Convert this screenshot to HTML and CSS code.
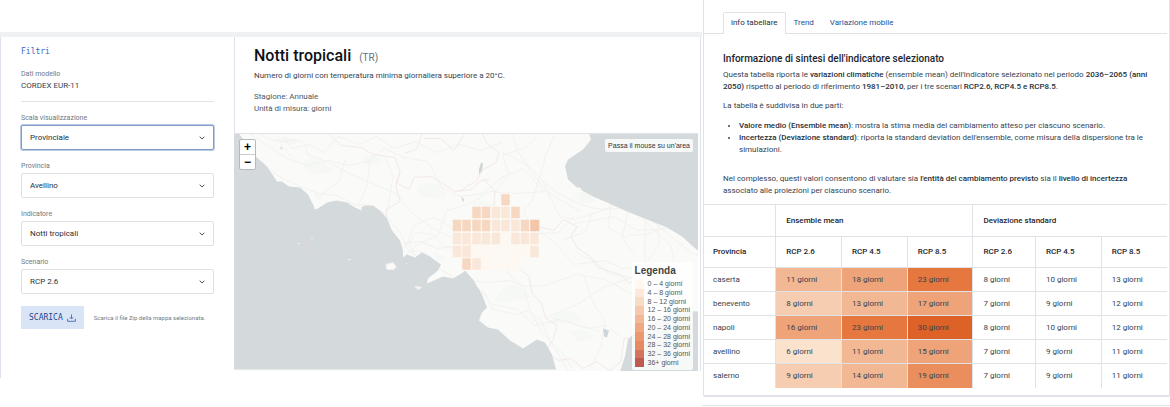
FILE: index.html
```html
<!DOCTYPE html>
<html lang="it">
<head>
<meta charset="utf-8">
<title>Notti tropicali</title>
<link rel="stylesheet" href="styles.css">
</head>
<body>
<div class="page">
  <div class="explorer">
    <div class="band"></div>
    <div class="explorer-body">
      <aside class="filters">
        <h2 class="filters-title">Filtri</h2>
        <div class="model">
          <div class="label">Dati modello</div>
          <div class="model-name">CORDEX EUR-11</div>
        </div>
        <div class="field">
          <label class="label" for="scala">Scala visualizzazione</label>
          <div class="picker"><select class="select active" id="scala"><option>Provinciale</option></select><svg class="chevron" viewBox="0 0 6 4"><path d="M.7.7 3 3 5.300.7"/></svg></div>
        </div>
        <div class="field">
          <label class="label" for="provincia">Provincia</label>
          <div class="picker"><select class="select" id="provincia"><option>Avellino</option></select><svg class="chevron" viewBox="0 0 6 4"><path d="M.7.7 3 3 5.300.7"/></svg></div>
        </div>
        <div class="field">
          <label class="label" for="indicatore">Indicatore</label>
          <div class="picker"><select class="select" id="indicatore"><option>Notti tropicali</option></select><svg class="chevron" viewBox="0 0 6 4"><path d="M.7.7 3 3 5.300.7"/></svg></div>
        </div>
        <div class="field">
          <label class="label" for="scenario">Scenario</label>
          <div class="picker"><select class="select" id="scenario"><option>RCP 2.6</option></select><svg class="chevron" viewBox="0 0 6 4"><path d="M.7.7 3 3 5.300.7"/></svg></div>
        </div>
        <div class="download">
          <button class="download-button" type="button">SCARICA
            <svg class="download-icon" viewBox="0 0 9 8"><path d="M4.500.5v4.300M2.700 3.200l1.800 1.800 1.800-1.800M.6 4.800v2.500h7.800v-2.500"/></svg>
          </button>
          <span class="download-note">Scarica il file Zip della mappa selezionata.</span>
        </div>
      </aside>
      <main class="indicator">
        <header class="indicator-head">
          <h1 class="title">Notti tropicali <span class="code">(TR)</span></h1>
          <p class="description">Numero di giorni con temperatura minima giornaliera superiore a 20°C.</p>
          <p class="meta">Stagione: Annuale<br>Unità di misura: giorni</p>
        </header>
        <div class="map">
          <svg class="map-canvas" viewBox="0 0 464 238" preserveAspectRatio="xMidYMid slice">
            <rect class="land" width="464" height="238"/>
            <g class="park">
              <path d="M68 30q8-7 17-3t12 8-9 5-14-1zM186 52q12-5 20 1t6 9-15 2-14-6zM128 24q10-5 18 1t-5 6-13-2zM79 56l6 5 2 7-5-4zM198 120q6-2 10 3t-4 4zM40 7q9-6 20-2t-5 6zM268 156q15-9 22 0t10 7-22 4-14-5zM320 180q12-6 22 1t-5 9-18-4zM240 70q8-5 17 0t-6 7-13-2zM335 198q11-4 20 2t-11 8zM340 60q13-4 20 3t-12 6z"/>
            </g>
            <g class="road">
              <path d="M13 15q18 22 40 32t31 13l19 2 19 10 9-1 18 8 17 20 8 18 19 12 21 11 16 13 20 5 9 18 24 5 11-4 13 10 10 22 11 17 13 24"/>
              <path d="M26 1q15 9 31 6t16 14l22 8 22 12 33 14 14 6 12 17 20 15 18 9 30 19 30 2 23-8"/>
              <path d="M15 0l38 25 20 7 23-5 19 5 21-5 14-12 20 9 24 4 14 26 18 9 23-3 19-16 21-9 18 20 24 14 15 9"/>
              <path d="M278 0l6 18 12 19 17 21 13 25 14 3 23-7 25-10 18 7 22 10 16 14 20 11"/>
              <path d="M268 19q26 10 37 24t35 25 42 7 47 21 35 26"/>
              <path d="M170 123l15-13 19-8 9-25 23-7 20-12 28 2 26-2M170 110l17-2 16 7 28-3 32-1 24-10 37-2 16-16"/>
              <path d="M305 43q-5 28-16 34l7 13 23 18 21 23 31-4 17 8 22-2 15-22-1-31M403 77l8 11 0 46-15 11-25 8-26 17-33 14M411 88l26 24 4 21"/>
              <path d="M229 146l24 3 24-2 12 6 22-1 32-11 28 5 26 14 29 0M290 155l7 24 11 20 20 20 12 19M289 153l-13-11-9-14M349 141l10 28 12 18-4 26-11 24"/>
              <path d="M244 154l15 17 25 5 16 16 26-6 28 9 18-3 14 11M306 0l-14 14-23 8 6 20-14 15 16 12M321 0l-9 21-6 23 10 16"/>
              <path d="M48 0l9 15 18-4 15 8 14-16 21 8 17-8 18 12 21-7 22 11 22-8 21 6 23-8M111 27l-6 21-20 15M136 28l-3 24-8 19M151 22l8 21-6 36"/>
              <path d="M358 79l-7 20-22 7M377 70l-3 24 20 11M394 79l-6 26 12 14M431 94l-18 7-19 1M340 90q26-4 41-7l22 14 31-2"/>
              <path d="M172 113l8-21 19-8 16 8 14 16M179 120l-4-11 7-10 17 2 11 11 23 9 25-2M204 132l-13-13-15-2"/>
            </g>
            <g class="river">
              <path d="M356 124l20 17 23 3M317 184l36 10 13 4M46 10l12 14M340 117l20 12"/>
            </g>
            <g class="border-line">
              <path d="M95 0l12 12 20 2 12 7 22 3 5 14-4 15 4 15-14 8 1 10-5 6-12 2M166 39l-4 10 13 7 5-12 18-1 23 15 16-2 10-9 8-1"/>
              <path d="M188 0l-5 15-12 5M190 5h17l13 12 10-16M248 0l5 10 12 9-3 10-13 7-7 12-8 4-8 6M250 46l11 12-1 15 15 9 2 8"/>
              <path d="M277 94l15 5 11-6 17 4 9-11 14 7-6 10 6 11 13 9 8 11 24 8 7 8 10-6 5 3M283 133l12 10 3 17 9 9 5 16 11 7-4 14-8 14 14 7 12-2 12 10 13-7 14 9 11-9 3-23 17-2"/>
            </g>
            <g class="sea">
              <path d="M0 0h5L16 16l7 8 10 9 10 15h5l7 5 11 1 8 7 5 10 2 5 3-1 9-6 10-2 10 2 8 5 7 3-1-3 4-2h8l7 5 7 8 5 12 8 10 3 10v7l4-3 8 3 7-5 8 4 11 8-3 6-10 8-1 5 16-7 10 2 10-6 2-2 8 9 9 15 5 13-5 5-3 8 9 7 10 2 12 11 13 8 14-9 8 3 7 12 4 15H0z"/>
              <path d="M355 0l2 6-8 10-15 10-3 7 3 13 9 8 3 0 2 3 11 6 14 6 20 9 20 8 20 8 15 9 11 10 5 4V0zM386 238l5-15 3-17 5-5 15-4 10-12 14-8h12l14 1v60z"/>
            </g>
            <path class="lake" d="M247 29l2 1-1 7-3 4v-5zM369 195l6 2-2 7-3-1zM380 145l6 3M46 13l3 2-2 1zM227 63l3 3-1 3z"/>
            <path class="island" d="M152 131l7-2 3 4-2 3h-7zM181 153l7 1-4 2zM77 105h2M64 110h2M114 126h3M172 130h1"/>
            <path class="isle-mark" d="M70 112h2M73 111h2M71 115h2"/>
            <g class="cells">
              <path class="c3" d="M267 60.500h9v11.500h-9zM238 73h9v12h-9zM247.500 73h9v12h-9zM277 73h9v12h-9zM218.500 86h9v12h-9zM228 86h9v12h-9zM238 86h9v12h-9zM247.500 86h9v12h-9zM286.500 86h9v12h-9zM228 124.500h9v12h-9z"/>
              <path class="c4" d="M296 86h9.500v12H296z"/>
              <path class="c2" d="M257.500 73h9v12h-9zM267 73h9v12h-9zM257.500 86h9v12h-9zM267 86h9v12h-9zM277 86h9v12h-9zM218.500 99h9v12h-9zM228 99h9v12h-9zM238 99h9v12h-9zM247.500 99h9v12h-9zM257.500 99h9v12h-9zM277 99h9v12h-9zM286.500 99h9v12h-9zM296 99h9v12h-9zM218.500 112h9v12h-9zM228 112h9v12h-9zM296 112h9v12h-9zM238 124.500h9v12h-9z"/>
              <path class="c1" d="M267 99h9v12h-9zM238 112h9v12h-9zM247.500 112h9v12h-9zM257.500 112h9v12h-9zM267 112h9v12h-9zM277 112h9v12h-9zM286.500 112h9v12h-9zM247.500 124.500h9v12h-9zM257.500 124.500h9v12h-9zM267 124.500h9v12h-9zM277 124.500h9v12h-9z"/>
            </g>
          </svg>
          <div class="zoom">
            <button class="zoom-button" type="button">+</button>
            <button class="zoom-button" type="button">−</button>
          </div>
          <div class="hint">Passa il mouse su un'area</div>
          <div class="legend">
            <h3 class="legend-title">Legenda</h3>
            <ul class="scale">
              <li><i class="s1"></i>0 – 4 giorni</li>
              <li><i class="s2"></i>4 – 8 giorni</li>
              <li><i class="s3"></i>8 – 12 giorni</li>
              <li><i class="s4"></i>12 – 16 giorni</li>
              <li><i class="s5"></i>16 – 20 giorni</li>
              <li><i class="s6"></i>20 – 24 giorni</li>
              <li><i class="s7"></i>24 – 28 giorni</li>
              <li><i class="s8"></i>28 – 32 giorni</li>
              <li><i class="s9"></i>32 – 36 giorni</li>
              <li><i class="s10"></i>36+ giorni</li>
            </ul>
          </div>
        </div>
      </main>
    </div>
  </div>
  <div class="side">
    <section class="panel">
      <nav class="tabs">
        <a class="tab current" href="#info">info tabellare</a>
        <a class="tab" href="#trend">Trend</a>
        <a class="tab" href="#variazione">Variazione mobile</a>
      </nav>
      <div class="text" id="info">
        <h2 class="heading">Informazione di sintesi dell'indicatore selezionato</h2>
        <p>Questa tabella riporta le <b>variazioni climatiche</b> (ensemble mean) dell'indicatore selezionato nel periodo <b>2036–2065 (anni 2050)</b> rispetto al periodo di riferimento <b>1981–2010</b>, per i tre scenari <b>RCP2.6, RCP4.5 e RCP8.5</b>.</p>
        <p>La tabella è suddivisa in due parti:</p>
        <ul class="parts">
          <li><b>Valore medio (Ensemble mean)</b>: mostra la stima media del cambiamento atteso per ciascuno scenario.</li>
          <li><b>Incertezza (Deviazione standard)</b>: riporta la standard deviation dell'ensemble, come misura della dispersione tra le simulazioni.</li>
        </ul>
        <p>Nel complesso, questi valori consentono di valutare sia <b>l'entità del cambiamento previsto</b> sia il <b>livello di incertezza</b> associato alle proiezioni per ciascuno scenario.</p>
      </div>
      <table class="data">
        <colgroup><col class="w-name"><col class="w-mean"><col class="w-mean"><col class="w-mean"><col class="w-dev"><col class="w-mean"><col class="w-mean"></colgroup>
        <thead>
          <tr class="groups"><td></td><th colspan="3">Ensemble mean</th><th colspan="3">Deviazione standard</th></tr>
          <tr class="scenarios"><th>Provincia</th><th>RCP 2.6</th><th>RCP 4.5</th><th>RCP 8.5</th><th>RCP 2.6</th><th>RCP 4.5</th><th>RCP 8.5</th></tr>
        </thead>
        <tbody>
          <tr><td>caserta</td><td class="h3">11 giorni</td><td class="h4">18 giorni</td><td class="h6">23 giorni</td><td>8 giorni</td><td>10 giorni</td><td>13 giorni</td></tr>
          <tr><td>benevento</td><td class="h2">8 giorni</td><td class="h3">13 giorni</td><td class="h4">17 giorni</td><td>7 giorni</td><td>9 giorni</td><td>12 giorni</td></tr>
          <tr><td>napoli</td><td class="h4">16 giorni</td><td class="h6">23 giorni</td><td class="h7">30 giorni</td><td>8 giorni</td><td>10 giorni</td><td>12 giorni</td></tr>
          <tr><td>avellino</td><td class="h1">6 giorni</td><td class="h3">11 giorni</td><td class="h4">15 giorni</td><td>7 giorni</td><td>9 giorni</td><td>11 giorni</td></tr>
          <tr><td>salerno</td><td class="h2">9 giorni</td><td class="h3">14 giorni</td><td class="h5">19 giorni</td><td>7 giorni</td><td>9 giorni</td><td>11 giorni</td></tr>
        </tbody>
      </table>
    </section>
    <div class="next-panel"></div>
  </div>
</div>
</body>
</html>
```

FILE: styles.css
```css
* { box-sizing: border-box; }
body {
  margin: 0;
  background: #fff;
  color: #37424f;
  font-family: Roboto, sans-serif;
  font-size: 8px;
  line-height: 12px;
}
h1, h2, h3, p, ul { margin: 0; padding: 0; font-weight: 400; }
b { font-weight: 500; color: #26303b; }

.page { display: grid; grid-template-columns: 3fr 2fr; }

/* Left side: filters and map */
.explorer { padding-top: 32px; min-width: 0; }
.band { height: 5px; background: #f0f1f3; }
.explorer-body { display: grid; grid-template-columns: 1fr 2fr; align-items: start; }

.filters {
  border-left: 1px solid #dfe2ea;
  padding: 9px 20px 49px;
}
.filters-title {
  font: 8px/12px "DejaVu Sans Mono", monospace;
  color: #3a68c4;
}
.label { display: block; color: #6f7883; font-size: 7px; line-height: 10px; }
.model {
  padding: 11px 0 8px;
  border-bottom: 1px solid #dfe3ea;
  margin-bottom: 11px;
}
.model-name { line-height: 14px; }
.field { margin-bottom: 11px; }
.field .label { margin-bottom: 2px; }
.picker { position: relative; }
.select {
  appearance: none;
  display: block;
  width: 100%;
  height: 25px;
  padding: 0 8px;
  border: 1px solid #dde1e8;
  border-radius: 2px;
  background: #fff;
  color: #26303b;
  font: 8px/12px Roboto, sans-serif;
}
.select.active { border-color: #7f9cc9; box-shadow: 0 0 0 1px #bccbe4; }
.chevron {
  position: absolute;
  right: 9px;
  top: 11px;
  width: 6px;
  height: 4px;
  fill: none;
  stroke: #4b5661;
  stroke-width: 1;
}
.download { display: flex; align-items: center; gap: 10px; padding-top: 1px; white-space: nowrap; }
.download-button {
  display: flex;
  align-items: center;
  gap: 4px;
  height: 23px;
  padding: 0 8px;
  border: 0;
  background: #d9e5f6;
  color: #1f448c;
  font: 8px/12px "DejaVu Sans Mono", monospace;
}
.download-icon { width: 9px; height: 8px; fill: none; stroke: #5675ac; stroke-width: 1; }
.download-note { font-size: 6px; color: #737c87; }

.indicator { margin-right: 1px; padding-right: 2px; border-right: 1px solid #dfe2ea; min-width: 0; }
.indicator-head { padding: 9px 19px 18px; border-left: 1px solid #dfe2ea; }
.title { color: #0d1218; font-size: 16px; line-height: 20px; font-weight: 500; }
.code { margin-left: 4px; color: #68717b; font-size: 10px; font-weight: 400; }
.description { padding: 2px 0 9px; }
.meta { color: #4d5762; }

/* Map */
.map {
  position: relative;
  aspect-ratio: 464 / 238;
  border-top: 1px solid #dfe2e6;
  font-family: "Liberation Sans", Arial, sans-serif;
  font-size: 7px;
  overflow: hidden;
}
.map-canvas { display: block; width: 100%; height: 100%; }
.land { fill: #fafaf8; }
.park { fill: #f6f8f5; }
.road path { fill: none; stroke: #f2f2f1; stroke-width: 1; }
.river path { fill: none; stroke: #f1f3f4; stroke-width: 1; }
.border-line path { fill: none; stroke: #f4e9ea; stroke-width: 1; }
.sea { fill: #d4dadc; }
.lake { fill: #cfd6d9; }
.island { fill: #fafaf8; stroke: #f2f0f0; stroke-width: 1; }
.isle-mark { fill: none; stroke: #eccfd1; stroke-width: 1; }
.cells path { stroke: #fff8f2; stroke-width: 1; stroke-dasharray: 1 1; }
.cells .c1 { fill: #fdf8f2; }
.cells .c2 { fill: #f9e8da; }
.cells .c3 { fill: #f6d8c2; }
.cells .c4 { fill: #f4c5a8; }

.zoom {
  position: absolute;
  top: 5px;
  left: 5px;
  display: grid;
  width: 17px;
  border: 1px solid #b5babc;
  border-radius: 2px;
  background: #fff;
}
.zoom-button {
  height: 14px;
  padding: 0;
  border: 0;
  background: none;
  color: #000;
  font: bold 12px/14px "Liberation Sans", Arial, sans-serif;
}
.zoom-button + .zoom-button { height: 15px; border-top: 1px solid #ccc; }
.hint {
  position: absolute;
  top: 5px;
  right: 5px;
  padding: 0 3px;
  border-radius: 2px;
  background: rgba(255, 255, 255, .8);
  color: #333;
  line-height: 13px;
}
.legend {
  position: absolute;
  right: 5px;
  bottom: 1px;
  top: 128px;
  display: flex;
  flex-direction: column;
  padding: 2px 3px 3px;
  border-radius: 2px;
  background: rgba(255, 255, 255, .8);
  color: #555;
}
.legend-title { color: #444; font-size: 10px; line-height: 14px; font-weight: 700; margin-bottom: 2px; }
.scale { flex: 1; display: grid; grid-auto-rows: 1fr; list-style: none; }
.scale li { display: flex; align-items: center; gap: 4px; line-height: 8px; white-space: nowrap; }
.scale i { align-self: stretch; width: 9px; }
.s1 { background: #fff8f1; }
.s2 { background: #fce9db; }
.s3 { background: #f8dcc5; }
.s4 { background: #f6c9ae; }
.s5 { background: #f3b897; }
.s6 { background: #f0a882; }
.s7 { background: #ec986e; }
.s8 { background: #e58b62; }
.s9 { background: #d3735d; }
.s10 { background: #bd5a52; }

/* Right side: tabs, text and table */
.side { min-width: 0; }
.panel {
  margin-left: 1px;
  padding: 12px 2px 7px 0;
  border: solid #dfe2e6;
  border-width: 0 1px 2px;
  border-radius: 0 0 2px 2px;
}
.tabs { display: flex; padding-left: 19px; border-bottom: 1px solid #dfe2e6; }
.tab {
  padding: 0 7px;
  border: 1px solid transparent;
  border-bottom: 0;
  color: #24508f;
  line-height: 20px;
  text-decoration: none;
}
.tab.current {
  margin-bottom: -1px;
  padding-bottom: 1px;
  border-color: #dfe2e6;
  border-radius: 2px 2px 0 0;
  background: #fff;
  color: #26303b;
}
.text { padding: 18px 16px 0 19px; }
.heading { color: #1c242d; font-size: 10px; line-height: 14px; font-weight: 500; margin-bottom: 3px; }
.text p { margin-bottom: 7px; }
.parts { padding-left: 16px; margin: 8px 0 17px; }
.data { width: 100%; table-layout: fixed; border-collapse: collapse; }
.w-name { width: 15.500%; }
.w-mean { width: 14.200%; }
.w-dev { width: 13.500%; }
.data th, .data td {
  height: 24px;
  padding: 0 0 0 10px;
  border: 1px solid #dfe2e6;
  text-align: left;
}
.data th { color: #1c242d; font-weight: 500; }
.data .groups > * { height: 32px; }
.data .scenarios > * { height: 31px; }
.data tr > :first-child { border-left: 0; padding-left: 9px; }
.data tr > :last-child { border-right: 0; }
.data tbody tr:last-child td { border-bottom: 0; }
.data .h1 { background: #fae2cc; }
.data .h2 { background: #f6cdb0; }
.data .h3 { background: #f2b793; }
.data .h4 { background: #eea379; }
.data .h5 { background: #ea8e5d; }
.data .h6 { background: #e6783f; }
.data .h7 { background: #de6127; }
.next-panel { height: 1px; margin-top: 8px; background: #dfe2e6; }
```
